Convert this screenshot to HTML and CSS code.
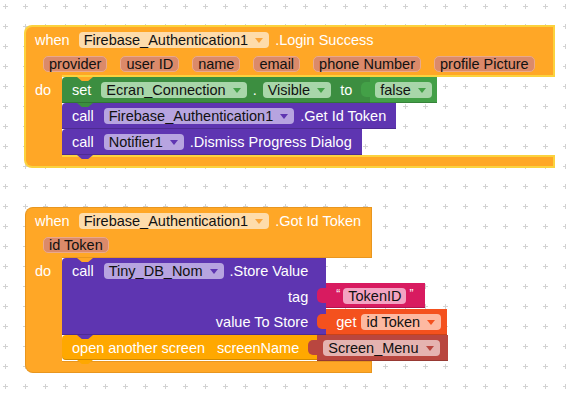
FILE: index.html
```html
<!DOCTYPE html>
<html lang="en">

<head>
    <meta charset="UTF-8">
    <meta name="viewport" content="width=device-width, initial-scale=1.0">
    <title>Blocks Editor</title>
    <link rel="stylesheet" href="styles.css">
</head>

<body>

    <div class="workspace">

        <!-- Workspace grid -->
        <svg class="grid" width="566" height="393">
            <defs>
                <pattern id="plus" width="20" height="20" patternUnits="userSpaceOnUse">
                    <rect x="3" y="6" width="5" height="1" fill="#d2d2d2" />
                    <rect x="5" y="4" width="1" height="5" fill="#d2d2d2" />
                </pattern>
            </defs>
            <rect width="566" height="393" fill="url(#plus)" />
        </svg>

        <!-- when Firebase_Authentication1.Login Success -->
        <div class="event selected ev-login">
            <div class="ev-head">
                <div class="ev-row">
                    <span class="kw">when</span>
                    <span class="chip chip-event">Firebase_Authentication1<i class="arr"></i></span>
                    <span>.Login Success</span>
                </div>
                <div class="ev-params">
                    <span class="param">provider</span>
                    <span class="param">user ID</span>
                    <span class="param">name</span>
                    <span class="param">email</span>
                    <span class="param">phone Number</span>
                    <span class="param">profile Picture</span>
                </div>
            </div>
            <div class="ev-body">
                <div class="ev-arm">do</div>
                <div class="stack">
                    <div class="stmt">
                        <div class="blk b-set has-input">
                            <span class="kw">set</span>
                            <span class="chip chip-set">Ecran_Connection<i class="arr"></i></span>
                            <span>.</span>
                            <span class="chip chip-set">Visible<i class="arr"></i></span>
                            <span class="to">to</span>
                        </div>
                        <div class="val v-logic">
                            <span class="chip chip-logic">false<i class="arr"></i></span>
                        </div>
                    </div>
                    <div class="stmt">
                        <div class="blk b-call">
                            <span class="kw">call</span>
                            <span class="chip chip-call">Firebase_Authentication1<i class="arr"></i></span>
                            <span>.Get Id Token</span>
                        </div>
                    </div>
                    <div class="stmt">
                        <div class="blk b-call">
                            <span class="kw">call</span>
                            <span class="chip chip-call">Notifier1<i class="arr"></i></span>
                            <span>.Dismiss Progress Dialog</span>
                        </div>
                    </div>
                </div>
            </div>
            <div class="ev-foot"></div>
        </div>

        <!-- when Firebase_Authentication1.Got Id Token -->
        <div class="event ev-token">
            <div class="ev-head">
                <div class="ev-row">
                    <span class="kw">when</span>
                    <span class="chip chip-event">Firebase_Authentication1<i class="arr"></i></span>
                    <span>.Got Id Token</span>
                </div>
                <div class="ev-params">
                    <span class="param">id Token</span>
                </div>
            </div>
            <div class="ev-body">
                <div class="ev-arm">do</div>
                <div class="stack">
                    <div class="stmt">
                        <div class="blk b-call multi">
                            <div class="brow">
                                <span class="kw">call</span>
                                <span class="chip chip-call">Tiny_DB_Nom<i class="arr"></i></span>
                                <span>.Store Value</span>
                            </div>
                            <div class="brow arg">tag</div>
                            <div class="brow arg last">value To Store</div>
                        </div>
                        <div class="inputs">
                            <div class="val v-text">
                                <span class="quote">&ldquo;</span>
                                <span class="chip chip-text">TokenID</span>
                                <span class="quote">&rdquo;</span>
                            </div>
                            <div class="val v-get">
                                <span class="get">get</span>
                                <span class="chip chip-get">id Token<i class="arr"></i></span>
                            </div>
                        </div>
                    </div>
                    <div class="stmt">
                        <div class="blk b-screen has-input">
                            <span>open another screen</span>
                            <span class="arg-name">screenName</span>
                        </div>
                        <div class="val v-screen">
                            <span class="chip chip-screen">Screen_Menu<i class="arr"></i></span>
                        </div>
                    </div>
                </div>
            </div>
            <div class="ev-foot"></div>
        </div>

    </div>

</body>

</html>
```

FILE: styles.css
```css
/* Basic page */
* {
    box-sizing: border-box;
}

body {
    margin: 0;
    font-family: "Liberation Sans", Arial, sans-serif;
    font-size: 14.5px;
    background-color: #fff;
}

.workspace {
    position: relative;
    width: 566px;
    height: 393px;
    overflow: hidden;
    background-color: #fff;
}

.grid {
    position: absolute;
    top: 0;
    left: 0;
}

/* Event blocks (placed on the canvas) */
.event {
    --edge: #e8961f;
    --bw: 1px;
    --ev: #ffa726;
    position: absolute;
    display: flex;
    flex-direction: column;
    width: max-content;
    color: white;
    white-space: nowrap;
}

.event.selected {
    --edge: #fbd23e;
    --bw: 2px;
}

.ev-login {
    left: 24px;
    top: 25px;
}

.ev-token {
    left: 25px;
    top: 207px;
}

.ev-head {
    position: relative;
    display: flex;
    flex-direction: column;
    gap: 8px;
    padding: 5px 10px 5px 9px;
    background-color: var(--ev);
    border: var(--bw) solid var(--edge);
    border-bottom: none;
    border-top-left-radius: 8px;
}

/* edge line under the head, right of the "do" arm */
.ev-head::after {
    content: "";
    position: absolute;
    left: 36px;
    right: 0;
    bottom: 0;
    height: var(--bw);
    background-color: var(--edge);
}

/* next-statement tab of the head */
.ev-head::before {
    content: "";
    position: absolute;
    left: 51px;
    bottom: -4px;
    width: 16px;
    height: 4px;
    background-color: var(--ev);
    clip-path: polygon(0 0, 100% 0, 70% 100%, 30% 100%);
    z-index: 3;
}

.ev-row {
    display: flex;
    align-items: center;
    gap: 6px;
    height: 16px;
}

.ev-row .kw {
    margin-right: 3px;
}

.ev-params {
    display: flex;
    align-items: center;
    gap: 13px;
    height: 16px;
    padding-left: 8px;
    margin-right: 8px;
}

.param {
    height: 16px;
    line-height: 14px;
    padding: 0 5px;
    color: #111;
    background-color: #db8a6a;
    border: 1px solid #eaa98c;
    border-radius: 5px;
}

.ev-body {
    display: flex;
    width: 0;
    align-self: flex-start;
}

.ev-arm {
    flex: none;
    width: calc(36px + var(--bw));
    padding-left: 9px;
    line-height: 26px;
    background-color: var(--ev);
    border-left: var(--bw) solid var(--edge);
}

.stack {
    flex: none;
    display: flex;
    flex-direction: column;
    align-items: flex-start;
}

.ev-foot {
    position: relative;
    height: calc(11px + var(--bw));
    background-color: var(--ev);
    border: var(--bw) solid var(--edge);
    border-top: none;
    border-bottom-left-radius: 8px;
}

.ev-foot::before {
    content: "";
    position: absolute;
    left: 36px;
    right: 0;
    top: 0;
    height: var(--bw);
    background-color: var(--edge);
}

/* Statement blocks */
.stmt {
    display: flex;
    align-items: flex-start;
}

.blk {
    position: relative;
    display: flex;
    align-items: center;
    gap: 6px;
    height: 26px;
    padding: 0 10px;
    border-top-left-radius: 4px;
    box-shadow: inset 0 -1px 0 rgba(0, 0, 0, 0.18);
}

.blk::after {
    content: "";
    position: absolute;
    left: 15px;
    bottom: -4px;
    width: 16px;
    height: 4px;
    background: inherit;
    clip-path: polygon(0 0, 100% 0, 70% 100%, 30% 100%);
    z-index: 2;
}

.blk .kw {
    margin-right: 4px;
}

.has-input {
    padding-right: 18px;
}

.b-set {
    background-color: #3c8e40;
}

.b-set .to {
    margin-left: 3px;
}

.b-call {
    background-color: #5e35b1;
}

.b-screen {
    height: 25px;
    background-color: #ffa800;
    border-bottom-left-radius: 4px;
}

.b-screen .arg-name {
    margin-left: 6px;
}

.multi {
    flex-direction: column;
    align-items: stretch;
    gap: 0;
    height: auto;
    padding-right: 18px;
}

.brow {
    display: flex;
    align-items: center;
    gap: 6px;
    height: 26px;
}

.brow .kw {
    margin-right: 4px;
}

.arg {
    justify-content: flex-end;
    height: 25px;
}

.arg.last {
    height: 26px;
}

/* Value blocks plugged into inputs */
.inputs {
    display: flex;
    flex-direction: column;
    align-items: flex-start;
    gap: 1px;
    padding-top: 25px;
}

.val {
    position: relative;
    display: flex;
    align-items: center;
    gap: 5px;
    height: 26px;
    padding: 0 6px;
    box-shadow: inset 0 -1px 0 rgba(0, 0, 0, 0.18);
}

/* output tab */
.val::before {
    content: "";
    position: absolute;
    left: -9px;
    top: 5px;
    width: 9px;
    height: 15px;
    background: inherit;
    border-radius: 5px 0 0 5px;
}

.v-logic {
    padding: 0 5px;
    background-color: #43a047;
}

.v-text {
    height: 25px;
    padding: 0 12px 0 10px;
    gap: 3px;
    background-color: #d81b60;
}

.v-text .quote {
    font-size: 12px;
    line-height: 12px;
    margin-top: -4px;
}

.v-get {
    padding: 0 6px 0 10px;
    background-color: #f4511e;
}

.v-screen {
    height: 26px;
    padding: 0 8px 0 6px;
    background-color: #b9463f;
}

/* Dropdown / text fields */
.chip {
    display: inline-flex;
    align-items: center;
    gap: 7px;
    height: 16px;
    line-height: 16px;
    padding: 0 6px 0 5px;
    color: #111;
    border-radius: 4px;
}

.arr {
    width: 0;
    height: 0;
    border-left: 4px solid transparent;
    border-right: 4px solid transparent;
    border-top: 5px solid currentColor;
}

.chip-event {
    background-color: #fedcab;
}

.chip-event .arr {
    color: #f9a43a;
}

.chip-set,
.chip-logic {
    background-color: #a8d6a9;
}

.chip-set .arr,
.chip-logic .arr {
    color: #43a047;
}

.chip-call {
    background-color: #b7a4e0;
}

.chip-call .arr {
    color: #5e35b1;
}

.chip-text {
    padding: 0 5px;
    background-color: #f3a3c2;
}

.chip-get {
    background-color: #fdb9a1;
}

.chip-get .arr {
    color: #f4511e;
}

.chip-screen {
    background-color: #e5b3b0;
}

.chip-screen .arr {
    color: #b9463f;
}
```
